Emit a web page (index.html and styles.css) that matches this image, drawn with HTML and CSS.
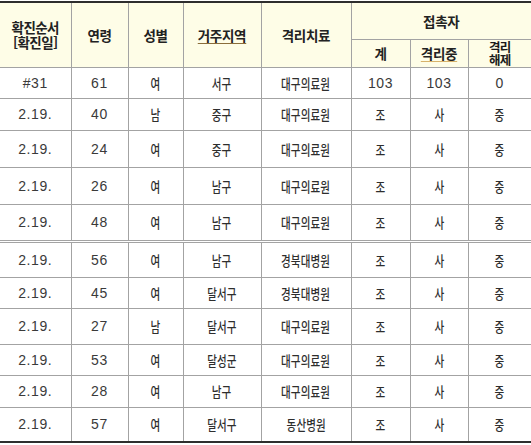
FILE: index.html
```html
<!DOCTYPE html>
<html lang="ko">
<head>
<meta charset="utf-8">
<title>확진자 현황</title>
<link rel="stylesheet" href="styles.css">
</head>
<body>
<table class="tbl">
  <colgroup>
    <col class="c1"><col class="c2"><col class="c3"><col class="c4"><col class="c5"><col class="c6"><col class="c7"><col class="c8">
  </colgroup>
  <thead>
    <tr class="h1">
      <th rowspan="2"><span class="two">확진순서<br>[확진일]</span></th>
      <th rowspan="2">연령</th>
      <th rowspan="2">성별</th>
      <th rowspan="2"><span class="ul">거주지역</span></th>
      <th rowspan="2">격리치료</th>
      <th colspan="3">접촉자</th>
    </tr>
    <tr class="h2">
      <th>계</th>
      <th><span class="ul2">격리중</span></th>
      <th class="squeeze"><span class="sq">격리<br>해제</span></th>
    </tr>
  </thead>
  <tbody>
    <tr class="r31"><td class="n">#31</td><td class="n">61</td><td class="k"><span class="kt">여</span></td><td class="k"><span class="kt">서구</span></td><td class="k"><span class="kt">대구의료원</span></td><td class="n">103</td><td class="n">103</td><td class="n">0</td></tr>
    <tr class="r32"><td class="n">2.19.</td><td class="n">40</td><td class="k"><span class="kt">남</span></td><td class="k"><span class="kt">중구</span></td><td class="k"><span class="kt">대구의료원</span></td><td class="k"><span class="kt">조</span></td><td class="k"><span class="kt">사</span></td><td class="k"><span class="kt">중</span></td></tr>
    <tr class="r37"><td class="n">2.19.</td><td class="n">24</td><td class="k"><span class="kt">여</span></td><td class="k"><span class="kt">중구</span></td><td class="k"><span class="kt">대구의료원</span></td><td class="k"><span class="kt">조</span></td><td class="k"><span class="kt">사</span></td><td class="k"><span class="kt">중</span></td></tr>
    <tr class="r37"><td class="n">2.19.</td><td class="n">26</td><td class="k"><span class="kt">여</span></td><td class="k"><span class="kt">남구</span></td><td class="k"><span class="kt">대구의료원</span></td><td class="k"><span class="kt">조</span></td><td class="k"><span class="kt">사</span></td><td class="k"><span class="kt">중</span></td></tr>
    <tr class="r37 dbl"><td class="n">2.19.</td><td class="n">48</td><td class="k"><span class="kt">여</span></td><td class="k"><span class="kt">남구</span></td><td class="k"><span class="kt">대구의료원</span></td><td class="k"><span class="kt">조</span></td><td class="k"><span class="kt">사</span></td><td class="k"><span class="kt">중</span></td></tr>
    <tr class="r36"><td class="n">2.19.</td><td class="n">56</td><td class="k"><span class="kt">여</span></td><td class="k"><span class="kt">남구</span></td><td class="k"><span class="kt">경북대병원</span></td><td class="k"><span class="kt">조</span></td><td class="k"><span class="kt">사</span></td><td class="k"><span class="kt">중</span></td></tr>
    <tr class="r31"><td class="n">2.19.</td><td class="n">45</td><td class="k"><span class="kt">여</span></td><td class="k"><span class="kt">달서구</span></td><td class="k"><span class="kt">경북대병원</span></td><td class="k"><span class="kt">조</span></td><td class="k"><span class="kt">사</span></td><td class="k"><span class="kt">중</span></td></tr>
    <tr class="r36"><td class="n">2.19.</td><td class="n">27</td><td class="k"><span class="kt">남</span></td><td class="k"><span class="kt">달서구</span></td><td class="k"><span class="kt">대구의료원</span></td><td class="k"><span class="kt">조</span></td><td class="k"><span class="kt">사</span></td><td class="k"><span class="kt">중</span></td></tr>
    <tr class="r31"><td class="n">2.19.</td><td class="n">53</td><td class="k"><span class="kt">여</span></td><td class="k"><span class="kt">달성군</span></td><td class="k"><span class="kt">대구의료원</span></td><td class="k"><span class="kt">조</span></td><td class="k"><span class="kt">사</span></td><td class="k"><span class="kt">중</span></td></tr>
    <tr class="r32"><td class="n">2.19.</td><td class="n">28</td><td class="k"><span class="kt">여</span></td><td class="k"><span class="kt">남구</span></td><td class="k"><span class="kt">대구의료원</span></td><td class="k"><span class="kt">조</span></td><td class="k"><span class="kt">사</span></td><td class="k"><span class="kt">중</span></td></tr>
    <tr class="r35"><td class="n">2.19.</td><td class="n">57</td><td class="k"><span class="kt">여</span></td><td class="k"><span class="kt">달서구</span></td><td class="k"><span class="kt">동산병원</span></td><td class="k"><span class="kt">조</span></td><td class="k"><span class="kt">사</span></td><td class="k"><span class="kt">중</span></td></tr>
  </tbody>
</table>
</body>
</html>
```

FILE: styles.css
```css
html, body {
  margin: 0;
  padding: 0;
  background: #ffffff;
}

body {
  padding-top: 1px;
  font-family: "Liberation Sans", "Noto Sans CJK KR", sans-serif;
  color: #333333;
}

.tbl {
  width: 531px;
  table-layout: fixed;
  border-collapse: collapse;
  border-spacing: 0;
  border-top: 2px solid #2e2e2e;
  border-bottom: 2px solid #2e2e2e;
}

.c1 { width: 71px; }
.c2 { width: 57px; }
.c3 { width: 55px; }
.c4 { width: 78px; }
.c5 { width: 90px; }
.c6 { width: 59px; }
.c7 { width: 58px; }
.c8 { width: 63px; }

.tbl th,
.tbl td {
  padding: 0;
  text-align: center;
  vertical-align: middle;
  border: 1px solid #a3a3a3;
  white-space: nowrap;
}

.tbl td {
  overflow: hidden;
}

.tbl th:first-child,
.tbl td:first-child {
  border-left: none;
}

.tbl th:last-child,
.tbl td:last-child {
  border-right: none;
}

.tbl th {
  background: #fefde7;
  font-family: "Noto Sans CJK KR", "Liberation Sans", sans-serif;
  font-weight: 700;
  font-size: 13.5px;
  letter-spacing: -0.3px;
  color: #222222;
  line-height: 16px;
}

.tbl .h1 { height: 37px; }
.tbl .h2 { height: 27px; }

.two {
  display: inline-block;
  line-height: 15px;
  letter-spacing: -0.6px;
}

.ul {
  text-decoration: underline;
  text-decoration-color: #8a6d3b;
  text-underline-offset: 2px;
}

.ul2 {
  text-decoration: underline;
  text-decoration-color: #d8b26a;
  text-underline-offset: 2px;
}

.squeeze {
  line-height: 13px;
}

.sq {
  display: inline-block;
  font-size: 12.5px;
  line-height: 13px;
  letter-spacing: -0.8px;
  color: #1a1a1a;
}

.tbl td.n {
  font-size: 14px;
  letter-spacing: 0.6px;
  color: #3a3a3a;
}

.tbl td.k {
  font-family: "Noto Sans CJK KR", "Liberation Sans", sans-serif;
  font-size: 13px;
  color: #2e2e2e;
}

.kt {
  display: inline-block;
  font-size: 13.5px;
  font-weight: 500;
  letter-spacing: 0.2px;
  transform: scaleX(0.78);
}

.r31 { height: 31px; }
.r32 { height: 32px; }
.r35 { height: 35px; }
.r36 { height: 36px; }
.r37 { height: 37px; }

.tbl .dbl td {
  border-bottom: 3px double #a3a3a3;
}
```
